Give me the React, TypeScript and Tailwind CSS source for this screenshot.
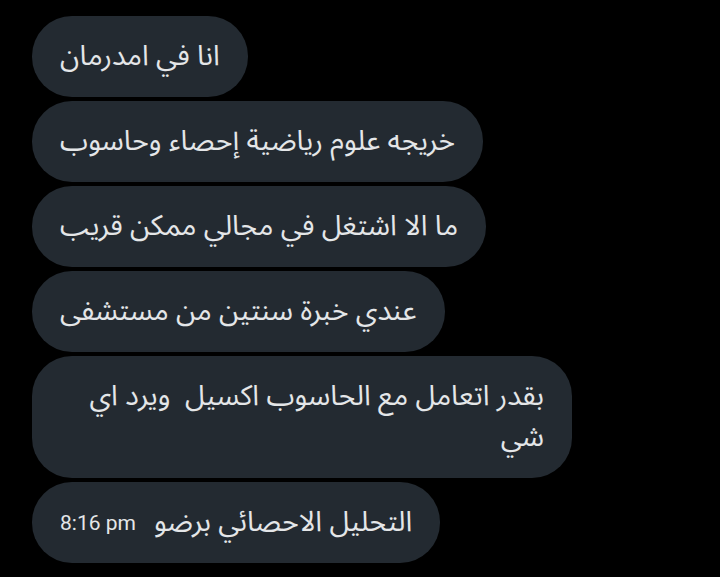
const messages = [
  'انا في امدرمان',
  'خريجه علوم رياضية إحصاء وحاسوب',
  'ما الا اشتغل في مجالي ممكن قريب',
  'عندي خبرة سنتين من مستشفى',
];

function Bubble({ children, className = '' }: { children: React.ReactNode; className?: string }) {
  return (
    <div className={`self-start bg-[#232a31] rounded-[40px] px-7 py-[20px] text-[#e4e6e8] text-[28.4px] leading-[41px] ${className}`}>
      {children}
    </div>
  );
}

export default function App() {
  return (
    <div
      className="w-[720px] h-[577px] bg-black overflow-hidden pl-8 pt-4 flex flex-col gap-1"
      style={{ fontFamily: '"Noto Sans Arabic", "Noto Sans", "DejaVu Sans", sans-serif' }}
    >
      {messages.map((m) => (
        <Bubble key={m}>
          <p dir="rtl">{m}</p>
        </Bubble>
      ))}

      <Bubble className="w-[540px]">
        <p dir="rtl" className="text-right">
          بقدر اتعامل مع الحاسوب اكسيل&nbsp; ويرد اي
          <br />
          شي
        </p>
      </Bubble>

      <Bubble>
        <div className="flex items-center gap-[18px]">
          <span className="text-[21px] leading-[28px] text-[#e4e6e8] font-['Roboto',sans-serif]">8:16 pm</span>
          <p dir="rtl">التحليل الاحصائي برضو</p>
        </div>
      </Bubble>
    </div>
  );
}
